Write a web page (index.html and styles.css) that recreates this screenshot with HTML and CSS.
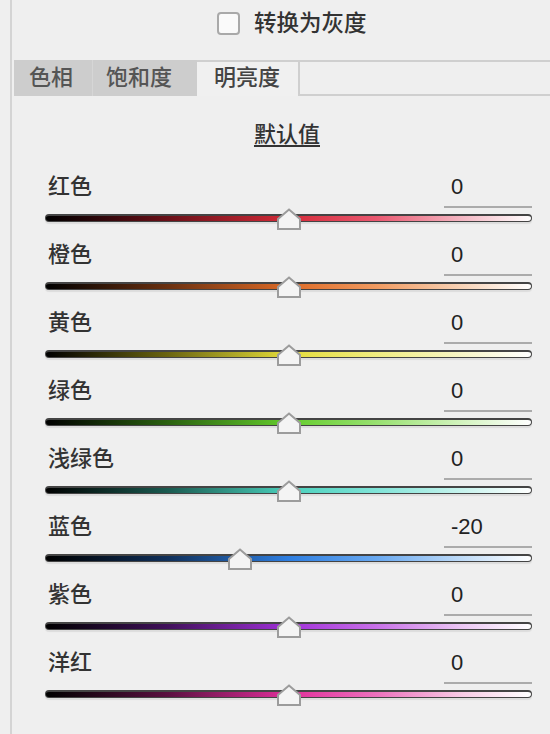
FILE: index.html
```html
<!DOCTYPE html>
<html>
<head>
    <meta charset="utf-8">
    <link rel="stylesheet" href="styles.css">
</head>
<body>
    <div class="panel">
        <div class="gray-row">
            <span class="checkbox"></span>
            <span class="gray-label">转换为灰度</span>
        </div>

        <div class="tabs">
            <div class="tab">色相</div>
            <div class="tab">饱和度</div>
            <div class="tab active">明亮度</div>
            <div class="tab-rest"></div>
        </div>

        <div class="defaults"><span>默认值</span></div>

        <div class="rows">
            <div class="row">
                <div class="head"><span class="label">红色</span><span class="value">0</span></div>
                <div class="track red"><span class="thumb" style="left: calc(50% - 12px)"></span></div>
            </div>
            <div class="row">
                <div class="head"><span class="label">橙色</span><span class="value">0</span></div>
                <div class="track orange"><span class="thumb" style="left: calc(50% - 12px)"></span></div>
            </div>
            <div class="row">
                <div class="head"><span class="label">黄色</span><span class="value">0</span></div>
                <div class="track yellow"><span class="thumb" style="left: calc(50% - 12px)"></span></div>
            </div>
            <div class="row">
                <div class="head"><span class="label">绿色</span><span class="value">0</span></div>
                <div class="track green"><span class="thumb" style="left: calc(50% - 12px)"></span></div>
            </div>
            <div class="row">
                <div class="head"><span class="label">浅绿色</span><span class="value">0</span></div>
                <div class="track aqua"><span class="thumb" style="left: calc(50% - 12px)"></span></div>
            </div>
            <div class="row">
                <div class="head"><span class="label">蓝色</span><span class="value">-20</span></div>
                <div class="track blue"><span class="thumb" style="left: calc(40% - 12px)"></span></div>
            </div>
            <div class="row">
                <div class="head"><span class="label">紫色</span><span class="value">0</span></div>
                <div class="track purple"><span class="thumb" style="left: calc(50% - 12px)"></span></div>
            </div>
            <div class="row">
                <div class="head"><span class="label">洋红</span><span class="value">0</span></div>
                <div class="track magenta"><span class="thumb" style="left: calc(50% - 12px)"></span></div>
            </div>
        </div>
    </div>
</body>
</html>
```

FILE: styles.css
```css
body {
    margin: 0;
    background-color: #efefef;
    font-family: "Liberation Sans", "Noto Sans CJK SC", sans-serif;
    color: #333;
}

.panel {
    margin-left: 10px;
    border-left: 2px solid #d4d4d4;
    height: 734px;
    box-sizing: border-box;
}

/* grayscale checkbox */
.gray-row {
    height: 60px;
    box-sizing: border-box;
    padding-top: 12px;
    display: flex;
    align-items: flex-start;
    padding-left: 205px;
}

.checkbox {
    width: 19px;
    height: 19px;
    border: 2px solid #a9a9a9;
    border-radius: 4px;
    background-color: #fafafa;
}

.gray-label {
    margin-left: 14px;
    font-size: 22.5px;
    font-weight: 500;
    line-height: 23px;
    color: #333;
}

/* tabs */
.tabs {
    display: flex;
    height: 36px;
    margin-left: 2px;
}

.tab {
    font-size: 22px;
    font-weight: 500;
    line-height: 36px;
    color: #555;
    background-color: #cdcdcd;
    padding-left: 15px;
    box-sizing: border-box;
}

.tab:nth-child(1) {
    width: 79px;
    border-right: 1px solid #d6d6d6;
}

.tab:nth-child(2) {
    width: 104px;
    padding-left: 13px;
}

.tab.active {
    width: 103px;
    background-color: #f0f0f0;
    border-top: 2px solid #cfcfcf;
    border-right: 2px solid #cfcfcf;
    line-height: 32px;
    padding-left: 17px;
    color: #444;
}

.tab-rest {
    flex-grow: 1;
    border-top: 2px solid #cfcfcf;
    border-bottom: 2px solid #cfcfcf;
}

.defaults {
    text-align: center;
    margin: 26px 0 26px 12px;
    font-size: 22px;
    font-weight: 500;
    line-height: 26px;
}

.defaults span {
    text-decoration: underline;
    text-underline-offset: 3px;
}

/* sliders */
.row {
    height: 68px;
    padding: 0 18px 0 33px;
}

.head {
    display: flex;
    justify-content: space-between;
    align-items: flex-start;
    height: 34px;
}

.label {
    padding-left: 3px;
    font-size: 22px;
    font-weight: 500;
    line-height: 26px;
}

.value {
    width: 88px;
    height: 34px;
    box-sizing: border-box;
    border-bottom: 2px solid #ababab;
    padding-left: 7px;
    font-size: 22px;
    line-height: 26px;
    color: #222;
}

.track {
    position: relative;
    margin-top: 6px;
    height: 8px;
    box-sizing: border-box;
    border: 1px solid #444;
    border-top-width: 2px;
    border-radius: 4px;
    box-shadow: 0 2px 1px rgba(0, 0, 0, 0.08);
}

.thumb {
    position: absolute;
    top: -8px;
    width: 24px;
    height: 22px;
    background: url("data:image/svg+xml,%3Csvg xmlns='http://www.w3.org/2000/svg' width='24' height='22'%3E%3Cpolygon points='12,1.5 23,11 23,21 1,21 1,11' fill='%23f4f4f4' stroke='%239c9c9c' stroke-width='2'/%3E%3C/svg%3E");
}

.red { background: linear-gradient(to right, #000, #6a1018 25%, #d42a38 50%, #ea5870 68%, #f4b8c4 86%, #fff); }
.orange { background: linear-gradient(to right, #000, #6a3010 25%, #dd6a26 50%, #f09a60 68%, #f8d4b8 86%, #fff); }
.yellow { background: linear-gradient(to right, #000, #6a6410 25%, #e4dc3a 50%, #f0ec80 68%, #f8f6c8 86%, #fff); }
.green { background: linear-gradient(to right, #000, #2a6010 25%, #64cc2c 50%, #98e070 68%, #d4f4c0 86%, #fff); }
.aqua { background: linear-gradient(to right, #000, #1a5a50 25%, #4ad0bc 50%, #80e4d8 68%, #c8f4ee 86%, #fff); }
.blue { background: linear-gradient(to right, #000, #10305a 25%, #2e7ee0 50%, #68a8f0 68%, #c0dcf8 86%, #fff); }
.purple { background: linear-gradient(to right, #000, #40105a 25%, #a030d8 50%, #c870e8 68%, #ecc8f4 86%, #fff); }
.magenta { background: linear-gradient(to right, #000, #5a1040 25%, #e02e9a 50%, #ec70bc 68%, #f8cce6 86%, #fff); }
```
